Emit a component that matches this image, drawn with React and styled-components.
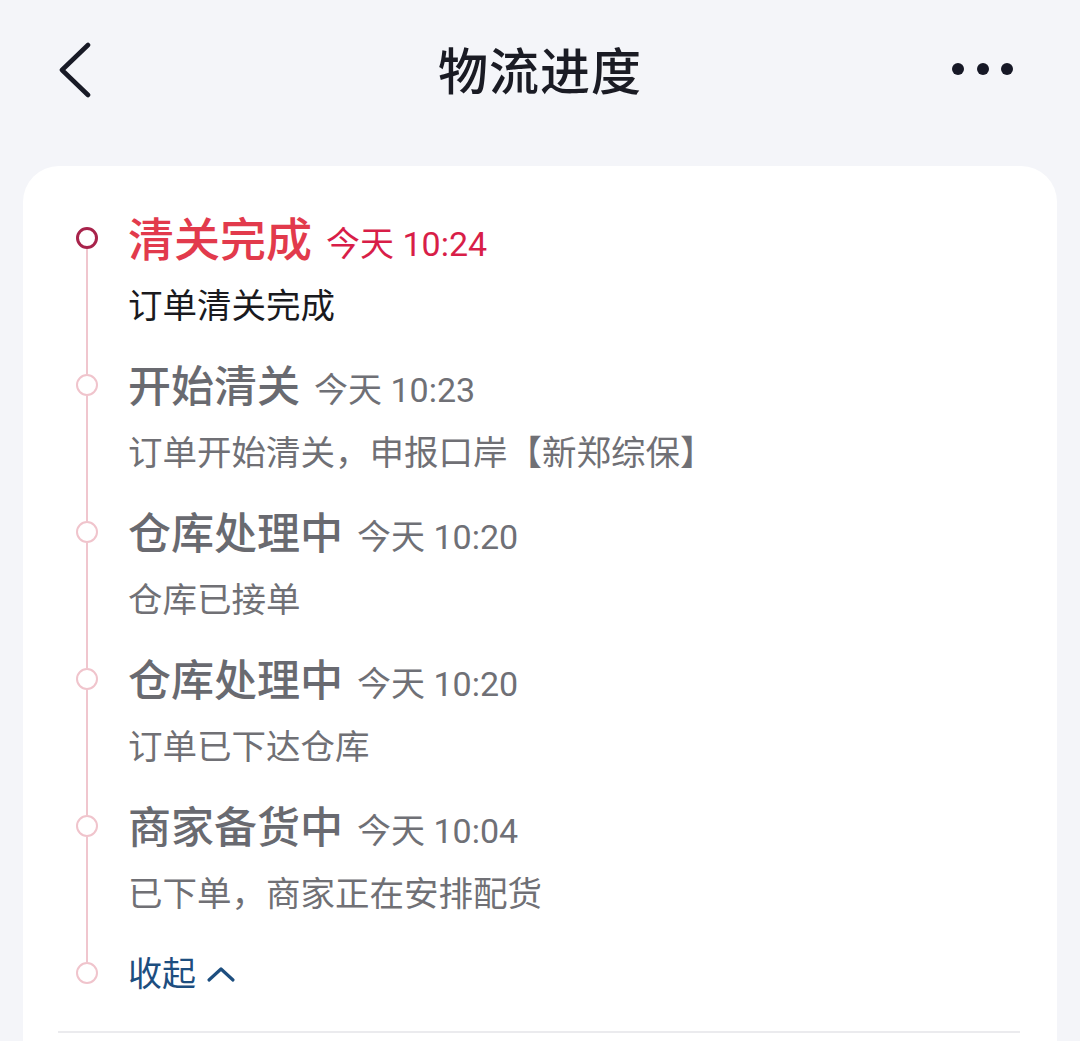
import React from "react";
import styled, { createGlobalStyle } from "styled-components";

const GlobalStyle = createGlobalStyle`
  html, body {
    margin: 0;
    padding: 0;
    background: #f4f5f9;
  }
  body {
    font-family: Roboto, "Noto Sans CJK SC", sans-serif;
  }
`;

const steps = [
  { title: "清关完成", time: "今天 10:24", desc: "订单清关完成", active: true },
  { title: "开始清关", time: "今天 10:23", desc: "订单开始清关，申报口岸【新郑综保】" },
  { title: "仓库处理中", time: "今天 10:20", desc: "仓库已接单" },
  { title: "仓库处理中", time: "今天 10:20", desc: "订单已下达仓库" },
  { title: "商家备货中", time: "今天 10:04", desc: "已下单，商家正在安排配货" },
];

function App() {
  return (
    <Page>
      <GlobalStyle />
      <Header>
        <IconButton aria-label="返回">
          <svg width="50" height="60" viewBox="0 0 50 60">
            <path
              d="M38 7 L12 32 L38 57"
              fill="none"
              stroke="#181a26"
              strokeWidth="4.6"
              strokeLinecap="round"
              strokeLinejoin="round"
            />
          </svg>
        </IconButton>
        <Title>物流进度</Title>
        <MoreButton aria-label="更多">
          <Dot />
          <Dot />
          <Dot />
        </MoreButton>
      </Header>

      <Card>
        {steps.map((s, i) => (
          <Step key={i}>
            <Rail>
              <Segment $hidden={i === 0} />
              <Node $active={s.active} />
              <Segment $grow />
            </Rail>
            <StepBody>
              <StepHead>
                <StepTitle $active={s.active}>{s.title}</StepTitle>
                <StepTime $active={s.active}>{s.time}</StepTime>
              </StepHead>
              <StepDesc $active={s.active}>{s.desc}</StepDesc>
            </StepBody>
          </Step>
        ))}
        <Step $last>
          <Rail>
            <Segment />
            <Node />
          </Rail>
          <Collapse>
            收起
            <svg width="30" height="20" viewBox="0 0 30 20">
              <path
                d="M3 16 L15 5 L27 16"
                fill="none"
                stroke="#1d4e7f"
                strokeWidth="3.2"
                strokeLinecap="round"
                strokeLinejoin="round"
              />
            </svg>
          </Collapse>
        </Step>
        <Divider />
      </Card>
    </Page>
  );
}

export default App;

const Page = styled.div`
  width: 1080px;
  height: 1041px;
  overflow: hidden;
  background: #f4f5f9;
`;

const Header = styled.div`
  height: 140px;
  display: grid;
  grid-template-columns: 1fr auto 1fr;
  align-items: center;
  padding: 0 67px 0 50px;
  box-sizing: border-box;
  margin-top: -2px;
`;

const IconButton = styled.div`
  height: 60px;
  display: flex;
  align-items: center;
`;

const Title = styled.h1`
  margin: 0 0 0 17px;
  font-size: 50px;
  font-weight: 500;
  color: #1a1b24;
  letter-spacing: 1px;
`;

const MoreButton = styled.div`
  justify-self: end;
  width: 61px;
  display: flex;
  justify-content: space-between;
  align-items: center;
  margin-top: 2px;
`;

const Dot = styled.span`
  width: 12px;
  height: 12px;
  border-radius: 50%;
  background: #161826;
`;

const Card = styled.div`
  margin: 28px 23px 0;
  background: #fff;
  border-radius: 36px 36px 0 0;
  padding: 42px 37px 0 53px;
  height: 900px;
`;

const Step = styled.div`
  display: flex;
  height: ${(p) => (p.$last ? "60px" : "147px")};
  margin-bottom: ${(p) => (p.$last ? "28px" : "0")};
`;

const Rail = styled.div`
  width: 22px;
  display: flex;
  flex-direction: column;
  align-items: center;
  margin-right: 30px;
`;

const Segment = styled.div`
  width: 2px;
  background: ${(p) => (p.$hidden ? "transparent" : "#f0c6ce")};
  height: ${(p) => (p.$grow ? "auto" : "19px")};
  flex: ${(p) => (p.$grow ? 1 : "none")};
`;

const Node = styled.div`
  width: 22px;
  height: 22px;
  box-sizing: border-box;
  border-radius: 50%;
  border: ${(p) => (p.$active ? "3px solid #a8234b" : "2px solid #f0c4cc")};
  background: #fff;
`;

const StepBody = styled.div`
  display: flex;
  flex-direction: column;
  padding-top: 2px;
`;

const StepHead = styled.div`
  display: flex;
  align-items: baseline;
  height: 60px;
  line-height: 60px;
`;

const StepTitle = styled.span`
  font-size: ${(p) => (p.$active ? "46px" : "43px")};
  font-weight: 500;
  color: ${(p) => (p.$active ? "#e23a4c" : "#696a70")};
  margin-right: 14px;
`;

const StepTime = styled.span`
  font-size: 34px;
  color: ${(p) => (p.$active ? "#d81e48" : "#6f7076")};
`;

const StepDesc = styled.div`
  margin-top: 6px;
  font-size: 34.5px;
  line-height: 60px;
  color: ${(p) => (p.$active ? "#1a1a1e" : "#707075")};
`;

const Collapse = styled.div`
  display: flex;
  align-items: center;
  gap: 10px;
  font-size: 34px;
  line-height: 60px;
  color: #1d4e7f;
  padding-top: 2px;
`;

const Divider = styled.div`
  height: 2px;
  background: #ebebee;
  margin-left: -18px;
`;
